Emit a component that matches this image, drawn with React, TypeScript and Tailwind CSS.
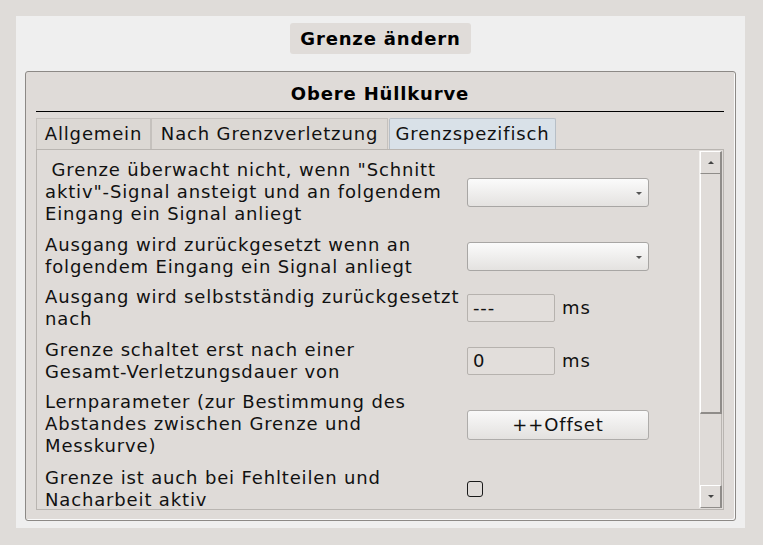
import type { ReactNode } from 'react';

function Dropdown() {
    return (
        <div className="relative h-[29px] w-[182px] rounded-[3px] border border-[#a8a6a4] bg-gradient-to-b from-[#fbfbfb] to-[#e4e2e0]">
            <span className="absolute right-[6px] top-[13px] h-0 w-0 border-x-[3px] border-t-[3px] border-x-transparent border-t-[#555]" />
        </div>
    );
}

function MsInput({ value }: { value: string }) {
    return (
        <div className="flex items-center">
            <div className="h-[28px] w-[88px] rounded-[2px] border border-[#b6b2ae] bg-[#e2dedb] pl-[5px] leading-[26px]">
                {value}
            </div>
            <span className="ml-[7px]">ms</span>
        </div>
    );
}

function Row({ label, children, className = 'items-center' }: { label: ReactNode; children: ReactNode; className?: string }) {
    return (
        <div className={`flex ${className}`}>
            <div className="w-[422px] shrink-0 whitespace-pre">{label}</div>
            {children}
        </div>
    );
}

function ScrollButton({ up }: { up: boolean }) {
    return (
        <div className="flex h-[23px] items-center justify-center border-l border-t border-b border-r-2 border-l-white border-t-white border-b-[#8f8c89] border-r-[#8f8c89] bg-[#e0dcd9]">
            {up ? (
                <span className="h-0 w-0 border-x-[3px] border-b-[3px] border-x-transparent border-b-[#444]" />
            ) : (
                <span className="h-0 w-0 border-x-[3px] border-t-[3px] border-x-transparent border-t-[#444]" />
            )}
        </div>
    );
}

export default function App() {
    const tabs = [
        { name: 'Allgemein', w: 'w-[115px]' },
        { name: 'Nach Grenzverletzung', w: 'w-[237px]' },
        { name: 'Grenzspezifisch', w: 'w-[167px]' },
    ];

    return (
        <div className="h-[545px] w-[763px] overflow-hidden bg-[#dfdcd9] p-4 font-['DejaVu_Sans',sans-serif] text-[18px] leading-[22px] tracking-[0.85px] text-[#111]">
            <div className="flex h-[512px] w-[729px] flex-col items-center bg-[#efefef] pt-[7px]">
                <div className="h-[31px] rounded-[3px] bg-[#e0dcd9] px-[10px] font-bold leading-[31px] text-black">
                    Grenze ändern
                </div>

                <div className="mt-[17px] flex h-[450px] w-[711px] flex-col rounded-[3px] border border-[#8c8986] bg-[#dfdbd8] pl-[10px] pr-[11px] shadow-[inset_-1px_-1px_0_#fafafa]">
                    <div className="border-b border-black pb-[6px] pt-[11px] text-center font-bold text-black">
                        Obere Hüllkurve
                    </div>

                    <div className="mt-[6px] flex h-[31px]">
                        {tabs.map((t, i) => (
                            <div
                                key={t.name}
                                className={
                                    i === 2
                                        ? `ml-[1px] ${t.w} rounded-t-[2px] border border-b-0 border-[#b7bfc7] bg-[#d9e1e8] text-center leading-[30px]`
                                        : `${t.w} border border-b-0 border-[#c5c1bd] bg-[#dcd8d4] text-center leading-[30px]`
                                }
                            >
                                {t.name}
                            </div>
                        ))}
                    </div>

                    <div className="flex h-[361px] border border-[#b9b5b1] bg-[#dfdbd8]">
                        <div className="flex flex-1 flex-col overflow-hidden pl-[8px] pt-[9px]">
                            <Row label={<>{' Grenze überwacht nicht, wenn "Schnitt'}<br />aktiv"-Signal ansteigt und an folgendem<br />Eingang ein Signal anliegt</>}>
                                <Dropdown />
                            </Row>
                            <div className="mt-[9px]">
                                <Row label={<>Ausgang wird zurückgesetzt wenn an<br />folgendem Eingang ein Signal anliegt</>}>
                                    <Dropdown />
                                </Row>
                            </div>
                            <div className="mt-[8px]">
                                <Row label={<>Ausgang wird selbstständig zurückgesetzt<br />nach</>}>
                                    <MsInput value="---" />
                                </Row>
                            </div>
                            <div className="mt-[9px]">
                                <Row label={<>Grenze schaltet erst nach einer<br />Gesamt-Verletzungsdauer von</>}>
                                    <MsInput value="0" />
                                </Row>
                            </div>
                            <div className="mt-[8px]">
                                <Row className="items-start" label={<>Lernparameter (zur Bestimmung des<br />Abstandes zwischen Grenze und<br />Messkurve)</>}>
                                    <button className="mt-[19px] h-[30px] w-[182px] rounded-[3px] border border-[#aeacaa] bg-gradient-to-b from-[#f9f9f9] to-[#e3e1df] leading-[28px]">
                                        ++Offset
                                    </button>
                                </Row>
                            </div>
                            <div className="mt-[10px]">
                                <Row label={<>Grenze ist auch bei Fehlteilen und<br />Nacharbeit aktiv</>}>
                                    <div className="h-[16px] w-[16px] rounded-[3px] border-[1.5px] border-[#1a1a1a]" />
                                </Row>
                            </div>
                        </div>

                        <div className="my-[1px] mr-[1px] flex w-[23px] flex-col border-l border-[#f3f1ef]">
                            <ScrollButton up />
                            <div className="h-[240px] border-l border-r-2 border-b-2 border-l-white border-r-[#8f8c89] border-b-[#8f8c89] bg-[#e0dcd9]" />
                            <div className="flex-1 border-r border-[#b9b5b1]" />
                            <ScrollButton up={false} />
                        </div>
                    </div>
                </div>
            </div>
        </div>
    );
}
